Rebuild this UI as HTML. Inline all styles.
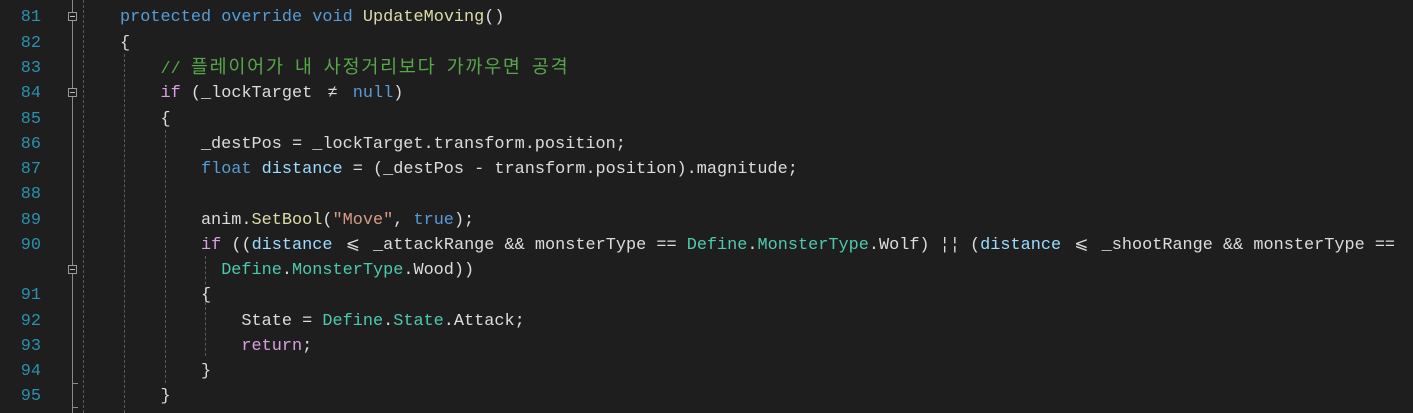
<!DOCTYPE html>
<html><head><meta charset="utf-8"><style>
html,body{margin:0;padding:0;background:#1e1e1e;width:1413px;height:413px;overflow:hidden}
body{position:relative;font-family:"Liberation Mono","Noto Sans CJK KR",monospace;font-size:16.88px;color:#dcdcdc}
.ln{position:absolute;left:0;width:41px;text-align:right;color:#2b91af;height:25.27px;line-height:25.27px}
.l{position:absolute;left:120px;white-space:pre;height:25.27px;line-height:25.27px}
.k{color:#569cd6}.c{color:#d8a0df}.t{color:#4ec9b0}.m{color:#dcdcaa}.v{color:#9cdcfe}.s{color:#d69d85}.g{color:#57a64a}
.w{display:inline-block;width:20.26px;text-align:center}
.kr{font-size:18.5px;letter-spacing:1.76px}
.guide{position:absolute;width:0;border-left:1px dashed #5a5a5a}
.fold{position:absolute;left:68px;width:9px;height:9px;border:1px solid #999;background:#1e1e1e;box-sizing:border-box}
.fold:after{content:"";position:absolute;left:1px;right:1px;top:3px;height:1px;background:#bbb}
#w{position:absolute;left:0;top:2px;width:1413px;height:413px}
</style></head><body><div id="w">
<div style="position:absolute;left:72px;top:-2px;width:1px;height:413px;background:#8a8a8a"></div>
<div style="position:absolute;left:72px;top:381px;width:6px;height:1px;background:#8a8a8a"></div>
<div style="position:absolute;left:72px;top:405px;width:6px;height:1px;background:#8a8a8a"></div>
<div class="guide" style="left:83px;top:-2px;height:413px"></div>
<div class="guide" style="left:124px;top:52px;height:359px"></div>
<div class="guide" style="left:165px;top:128px;height:253px"></div>
<div class="guide" style="left:205px;top:254px;height:100px"></div>
<div class="fold" style="top:10px"></div>
<div class="fold" style="top:86px"></div>
<div class="fold" style="top:263px"></div>

<div class="ln" style="top:3.4px">81</div>
<div class="ln" style="top:28.7px">82</div>
<div class="ln" style="top:53.9px">83</div>
<div class="ln" style="top:79.2px">84</div>
<div class="ln" style="top:104.5px">85</div>
<div class="ln" style="top:129.8px">86</div>
<div class="ln" style="top:155px">87</div>
<div class="ln" style="top:180.3px">88</div>
<div class="ln" style="top:205.6px">89</div>
<div class="ln" style="top:230.8px">90</div>
<div class="ln" style="top:281.4px">91</div>
<div class="ln" style="top:306.6px">92</div>
<div class="ln" style="top:331.9px">93</div>
<div class="ln" style="top:357.2px">94</div>
<div class="ln" style="top:382.4px">95</div>

<div class="l" style="top:3.4px"><span class="k">protected</span> <span class="k">override</span> <span class="k">void</span> <span class="m">UpdateMoving</span>()</div>
<div class="l" style="top:28.7px">{</div>
<div class="l" style="top:53.9px">    <span class="g">// <span class="kr">플레이어가</span> <span class="kr">내</span> <span class="kr">사정거리보다</span> <span class="kr">가까우면</span> <span class="kr">공격</span></span></div>
<div class="l" style="top:79.2px">    <span class="c">if</span> (_lockTarget <span class="w">≠</span> <span class="k">null</span>)</div>
<div class="l" style="top:104.5px">    {</div>
<div class="l" style="top:129.8px">        _destPos = _lockTarget.transform.position;</div>
<div class="l" style="top:155px">        <span class="k">float</span> <span class="v">distance</span> = (_destPos - transform.position).magnitude;</div>
<div class="l" style="top:205.6px">        anim.<span class="m">SetBool</span>(<span class="s">"Move"</span>, <span class="k">true</span>);</div>
<div class="l" style="top:230.8px">        <span class="c">if</span> ((<span class="v">distance</span> <span class="w">⩽</span> _attackRange <span class="w">&amp;&amp;</span> monsterType <span class="w">==</span> <span class="t">Define</span>.<span class="t">MonsterType</span>.Wolf) <span class="w">¦¦</span> (<span class="v">distance</span> <span class="w">⩽</span> _shootRange <span class="w">&amp;&amp;</span> monsterType <span class="w">==</span></div>
<div class="l" style="top:256.1px">          <span class="t">Define</span>.<span class="t">MonsterType</span>.Wood))</div>
<div class="l" style="top:281.4px">        {</div>
<div class="l" style="top:306.6px">            State = <span class="t">Define</span>.<span class="t">State</span>.Attack;</div>
<div class="l" style="top:331.9px">            <span class="c">return</span>;</div>
<div class="l" style="top:357.2px">        }</div>
<div class="l" style="top:382.4px">    }</div>
</div></body></html>
